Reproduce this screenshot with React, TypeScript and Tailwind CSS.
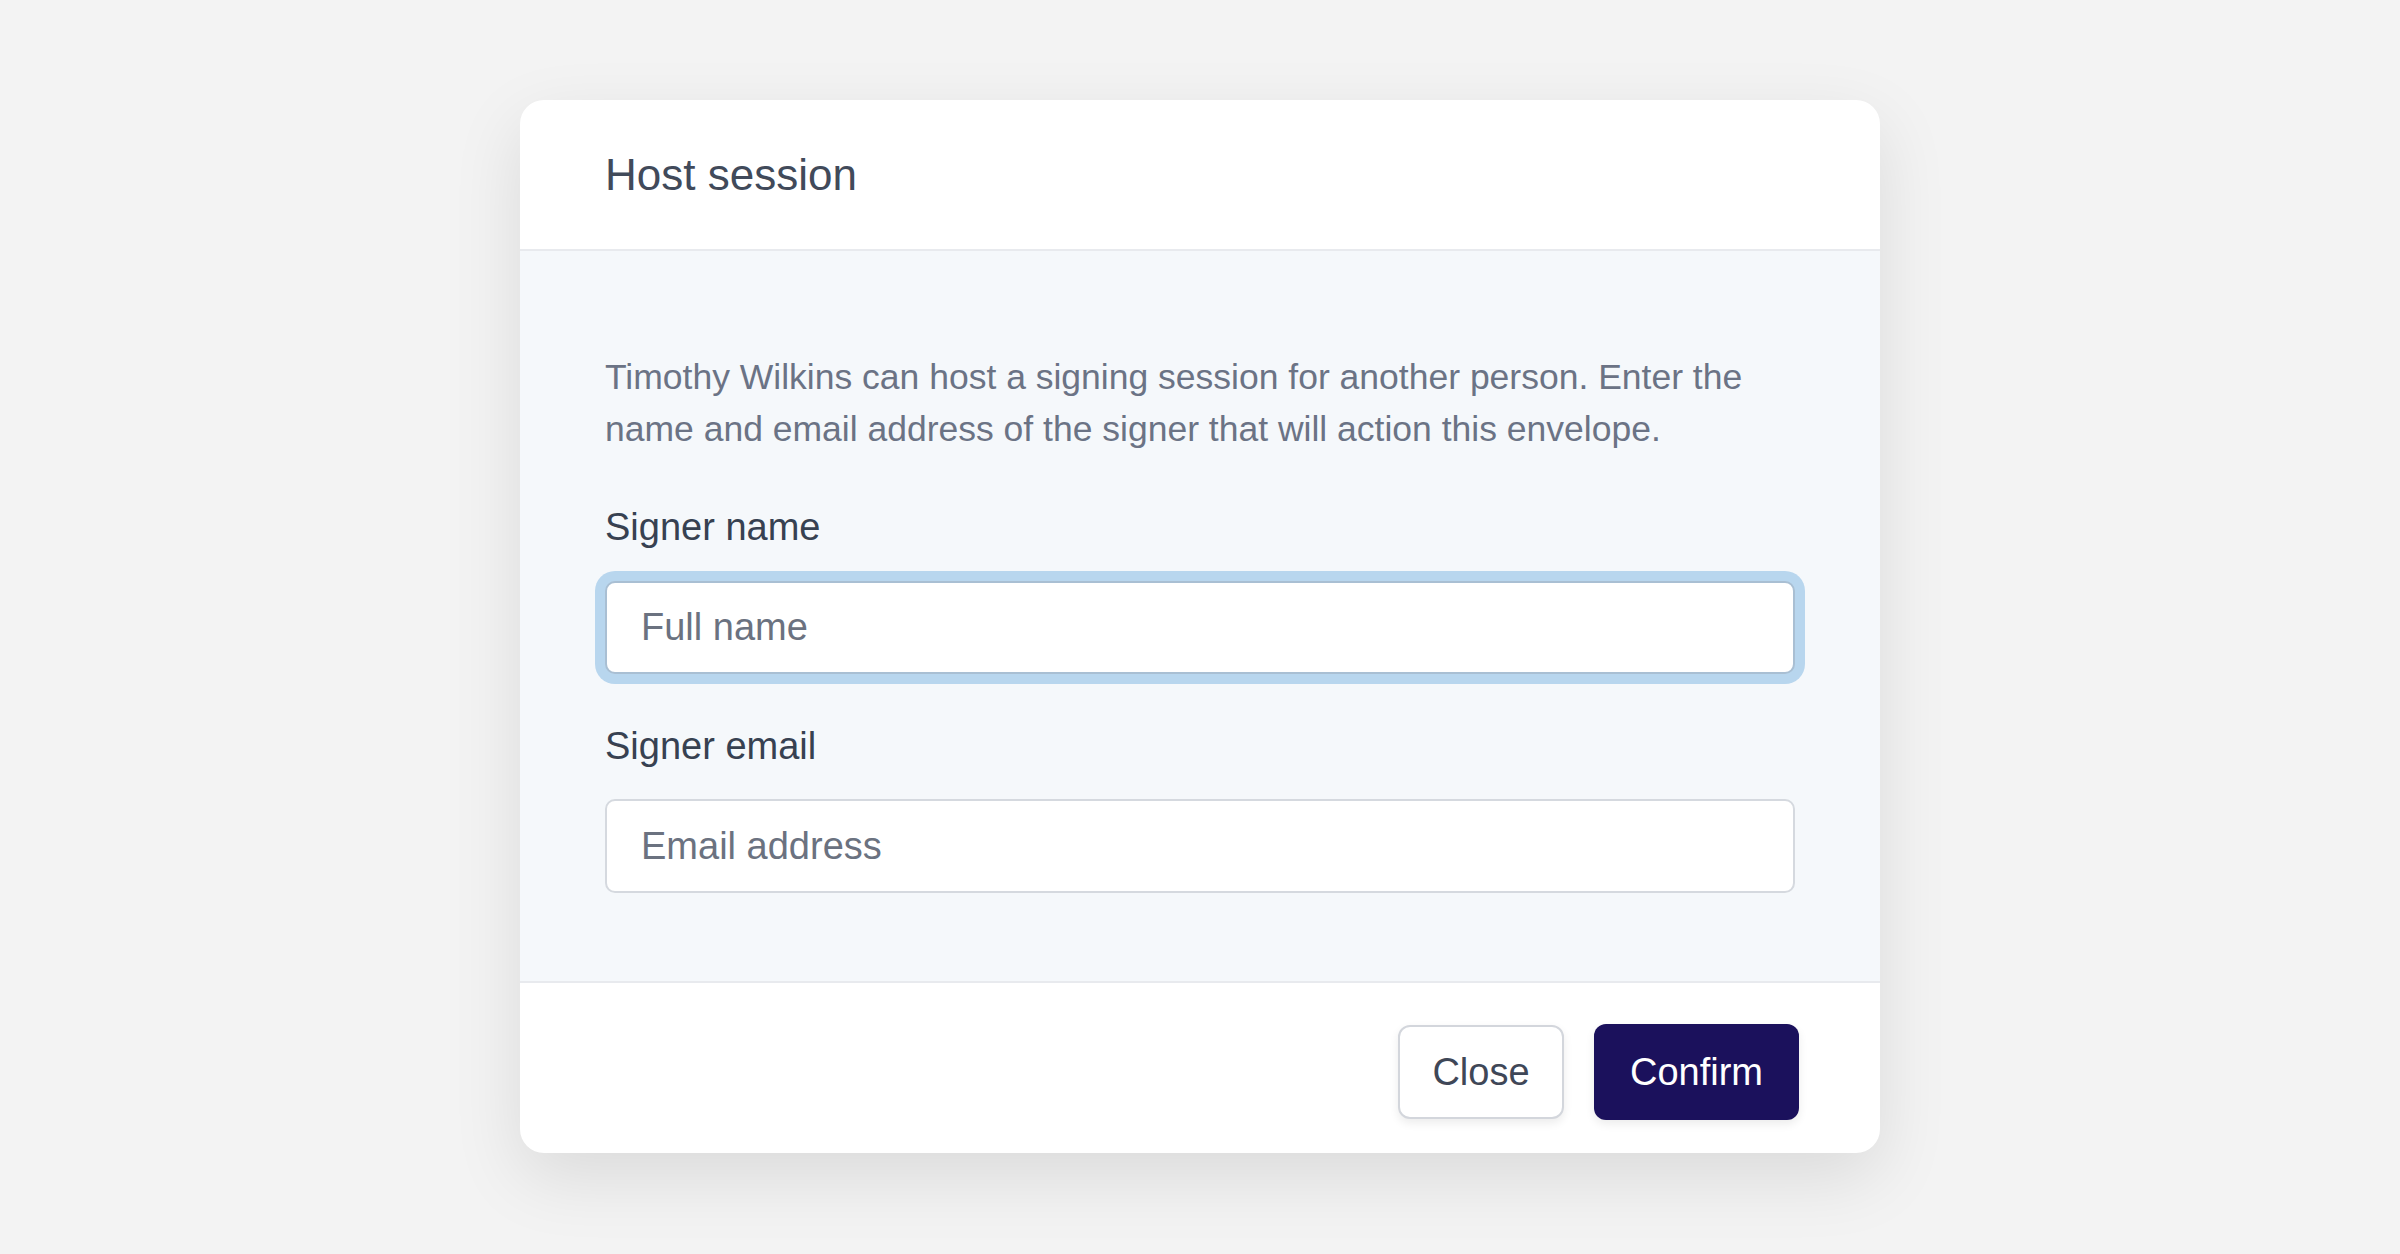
import { useState } from "react";

export default function App() {
  const [name, setName] = useState("");
  const [email, setEmail] = useState("");

  return (
    <main
      className="min-h-screen w-full bg-[#f3f3f3] flex justify-center pt-[100px]"
      style={{ fontFamily: '"Liberation Sans", Arial, sans-serif' }}
    >
      <div className="w-[1360px] h-fit rounded-[24px] bg-white overflow-hidden shadow-[0_24px_70px_rgba(0,0,0,0.10)]">
        {/* header */}
        <div className="h-[151px] px-[85px] flex items-center border-b-2 border-[#e8eaee]">
          <h2 className="text-[44px] leading-none text-[#414a5a]">Host session</h2>
        </div>

        {/* body */}
        <div className="bg-[#f5f8fb] px-[85px] pt-[100px] pb-[88px]">
          <p className="text-[35.5px] leading-[52px] text-[#6b7385]">
            Timothy Wilkins can host a signing session for another person. Enter the name and email
            address of the signer that will action this envelope.
          </p>

          <div className="mt-[44px] flex flex-col gap-[44px]">
            <div>
              <label htmlFor="signer-name" className="block text-[38px] leading-[57px] text-[#374151] mb-[25px]">
                Signer name
              </label>
              <input
                id="signer-name"
                type="text"
                value={name}
                onChange={(e) => setName(e.target.value)}
                placeholder="Full name"
                className="block w-full h-[93px] rounded-[10px] bg-white border-2 border-[#a9bfd3] ring-[10px] ring-[#b8d6ee] px-[34px] text-[38px] text-[#374151] placeholder:text-[#6b7280] outline-none"
              />
            </div>

            <div>
              <label htmlFor="signer-email" className="block text-[38px] leading-[57px] text-[#374151] mb-[24px]">
                Signer email
              </label>
              <input
                id="signer-email"
                type="email"
                value={email}
                onChange={(e) => setEmail(e.target.value)}
                placeholder="Email address"
                className="block w-full h-[94px] rounded-[10px] bg-white border-2 border-[#d5d9df] px-[34px] text-[38px] text-[#374151] placeholder:text-[#6b7280] outline-none"
              />
            </div>
          </div>
        </div>

        {/* footer */}
        <div className="h-[172px] pt-[8px] border-t-2 border-[#e8eaee] flex items-center justify-end gap-[30px] pr-[81px]">
          <button
            type="button"
            className="w-[166px] h-[94px] rounded-[12px] bg-white border-2 border-[#d3d6dc] text-[38px] text-[#3f4757] shadow-[0_4px_10px_rgba(0,0,0,0.08)]"
          >
            Close
          </button>
          <button
            type="button"
            className="w-[205px] h-[96px] rounded-[12px] bg-[#1b115c] text-[38px] text-white shadow-[0_4px_10px_rgba(0,0,0,0.08)]"
          >
            Confirm
          </button>
        </div>
      </div>
    </main>
  );
}
